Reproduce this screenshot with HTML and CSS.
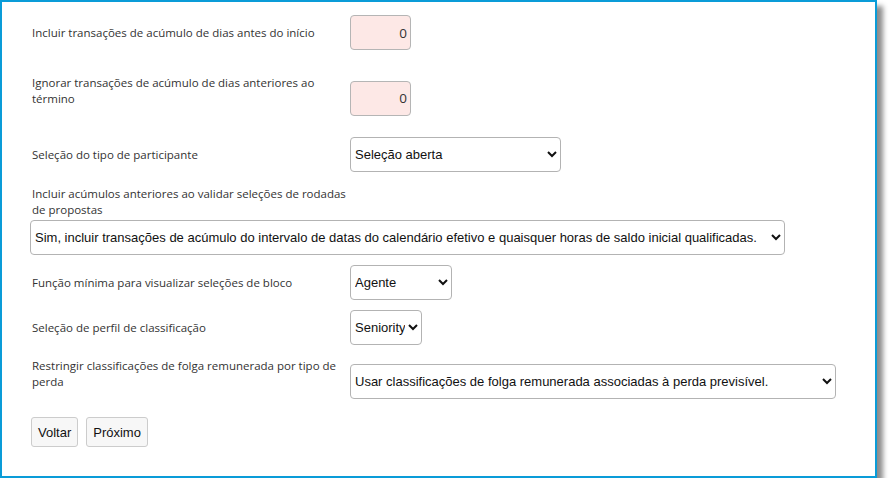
FILE: index.html
```html
<!DOCTYPE html>
<html lang="pt">
<head>
    <meta charset="UTF-8">
    <meta name="viewport" content="width=device-width, initial-scale=1.0">
    <title>Configurações de seleção</title>
    <link rel="stylesheet" href="styles.css">
</head>
<body>
    <div class="panel">
        <div class="field">
            <label for="beforeStart">Incluir transações de acúmulo de dias antes do início</label>
            <input type="text" id="beforeStart" class="num" value="0">
        </div>

        <div class="field field-2">
            <label for="beforeEnd" class="two-line">Ignorar transações de acúmulo de dias anteriores ao término</label>
            <input type="text" id="beforeEnd" class="num" value="0">
        </div>

        <div class="field field-3">
            <label for="participant">Seleção do tipo de participante</label>
            <select id="participant" class="sel-participant">
                <option>Seleção aberta</option>
            </select>
        </div>

        <div class="field-block">
            <label for="accruals">Incluir acúmulos anteriores ao validar seleções de rodadas de propostas</label>
            <select id="accruals" class="sel-wide">
                <option>Sim, incluir transações de acúmulo do intervalo de datas do calendário efetivo e quaisquer horas de saldo inicial qualificadas.</option>
            </select>
        </div>

        <div class="field field-5">
            <label for="role">Função mínima para visualizar seleções de bloco</label>
            <select id="role" class="sel-role">
                <option>Agente</option>
            </select>
        </div>

        <div class="field field-5">
            <label for="profile">Seleção de perfil de classificação</label>
            <select id="profile" class="sel-profile">
                <option>Seniority</option>
            </select>
        </div>

        <div class="field field-7">
            <label for="loss" class="two-line">Restringir classificações de folga remunerada por tipo de perda</label>
            <select id="loss" class="sel-loss">
                <option>Usar classificações de folga remunerada associadas à perda previsível.</option>
            </select>
        </div>

        <div class="buttons">
            <button>Voltar</button>
            <button>Próximo</button>
        </div>
    </div>
</body>
</html>
```

FILE: styles.css
```css
body {
    margin: 0;
    padding: 0;
    background-color: #fff;
    font-family: "Open Sans", "Segoe UI", sans-serif;
    color: #333;
}

.panel {
    box-sizing: border-box;
    width: 877px;
    height: 478px;
    border: 2px solid #0a9cd8;
    background-color: #fff;
    padding: 13px 28px 0 28px;
    box-shadow: 6px 6px 5px rgba(0, 0, 0, 0.45);
}

.field {
    display: flex;
    align-items: center;
}

.field label {
    box-sizing: border-box;
    width: 320px;
    padding-left: 2px;
    font-size: 11.5px;
    line-height: 16px;
}

.field label.two-line {
    margin-bottom: 14px;
}

.field-2 {
    margin-top: 25px;
}

.field-3 {
    margin-top: 16px;
}

.field-5 {
    margin-top: 10px;
}

.field-7 {
    margin-top: 13px;
}

.field-block {
    margin-top: 14px;
}

.field-block label {
    display: block;
    width: 318px;
    padding-left: 2px;
    font-size: 11.5px;
    line-height: 16px;
    margin-bottom: 2px;
}

.num {
    box-sizing: border-box;
    width: 61px;
    height: 35px;
    padding: 0 3px;
    border: 1px solid #b5b5b5;
    border-radius: 4px;
    background-color: #fde8e6;
    text-align: right;
    font-family: "Open Sans", "Segoe UI", sans-serif;
    font-size: 13.5px;
    color: #333;
}

select {
    box-sizing: border-box;
    height: 35px;
    padding: 0;
    border: 1px solid #b3b3b3;
    border-radius: 4px;
    background-color: #fff;
    font-family: "Liberation Sans", Arial, sans-serif;
    font-size: 13px;
    color: #111;
}

.sel-participant {
    width: 211px;
}

.sel-wide {
    width: 755px;
}

.sel-role {
    width: 102px;
}

.sel-profile {
    width: 72px;
}

.sel-loss {
    width: 486px;
}

.buttons {
    display: flex;
    gap: 8px;
    margin-top: 13px;
    padding-left: 1px;
}

.buttons button {
    height: 30px;
    padding: 0 6px;
    border: 1px solid #ccc;
    border-radius: 3px;
    background-color: #f7f7f7;
    font-family: "Liberation Sans", Arial, sans-serif;
    font-size: 13px;
    color: #111;
}
```
